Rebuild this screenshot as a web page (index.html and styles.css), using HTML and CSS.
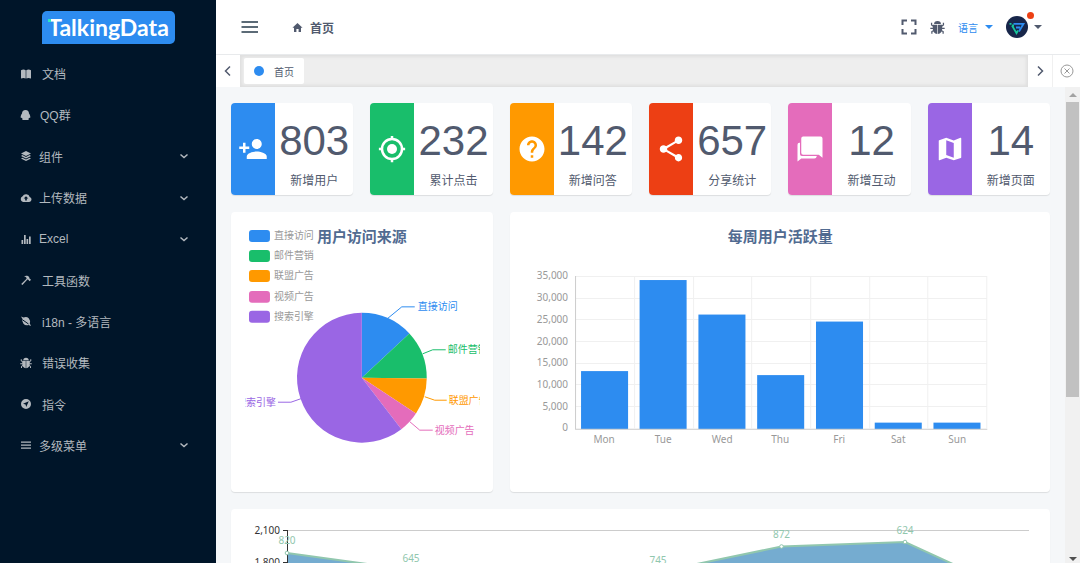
FILE: index.html
```html
<!DOCTYPE html>
<html lang="zh-CN">
<head>
<meta charset="utf-8">
<title>首页</title>
<meta name="viewport" content="width=device-width, initial-scale=1">
<link rel="stylesheet" href="styles.css">
</head>
<body>
<div class="app">
  <aside class="sidebar">
    <a class="logo" href="#"><span class="logo-dots"></span>TalkingData</a>
    <nav class="menu">
      <a class="menu-item" href="#"><svg class="icon" viewBox="0 0 12 12"><path d="M1 2.200Q3.500 1 5.700 2.200V10.600Q3.500 9.500 1 10.600zM6.300 2.200Q8.500 1 11 2.200V10.600Q8.500 9.500 6.300 10.600z"/></svg><span>文档</span></a>
      <a class="menu-item menu-item-qq" href="#"><svg class="icon" viewBox="0 0 12 12"><path d="M5.500 1C7.800 1 8.900 2.500 9 4.500C10 6 10.600 7.500 10.200 8.800C9.900 9.200 9.500 8.800 9.200 8.400C9 9.200 8.700 9.500 8.200 10C9.200 10.500 8.700 11 7.700 11H3.300C2.300 11 1.800 10.500 2.800 10C2.300 9.500 2 9.200 1.800 8.400C1.500 8.800 1.100 9.200 .8 8.800C.4 7.500 1 6 2 4.500C2.100 2.500 3.200 1 5.500 1z"/></svg><span>QQ群</span></a>
      <button class="menu-item menu-group" type="button"><svg class="icon" viewBox="0 0 12 12"><path d="M6 1L11 3.500L6 6L1 3.500zM2.400 5.100L6 6.900L9.600 5.100L11 6L6 8.500L1 6zM2.400 7.700L6 9.500L9.600 7.700L11 8.600L6 11.100L1 8.600z"/></svg><span>组件</span><svg class="chevron" viewBox="0 0 8 8"><path d="M.5 2.500L4 5.500L7.500 2.500"/></svg></button>
      <button class="menu-item menu-group" type="button"><svg class="icon" viewBox="0 0 12 12"><path fill-rule="evenodd" d="M9.700 5.100A3.800 3.800 0 0 0 2.600 4.300A3 3 0 0 0 3 10H9.200A2.500 2.500 0 0 0 9.700 5.100zM6 4.200L8.300 6.600H6.800V8.500H5.200V6.600H3.700z"/></svg><span>上传数据</span><svg class="chevron" viewBox="0 0 8 8"><path d="M.5 2.500L4 5.500L7.500 2.500"/></svg></button>
      <button class="menu-item menu-group" type="button"><svg class="icon" viewBox="0 0 12 12"><path d="M1.500 7H3.200V11H1.500zM4 2H5.700V11H4zM6.500 6H8.200V11H6.500zM9 3.500H10.700V11H9z"/></svg><span>Excel</span><svg class="chevron" viewBox="0 0 8 8"><path d="M.5 2.500L4 5.500L7.500 2.500"/></svg></button>
      <a class="menu-item" href="#"><svg class="icon" viewBox="0 0 12 12"><path d="M4 2.300C6 1.200 8 1.600 9.200 3L9.300 4.200L11 5.800L9.700 7.200L8 5.500L7.400 5.600L2.400 11L1.200 9.900L6.600 4.800L6.300 3.500Q5.500 2.500 4 2.300z"/></svg><span>工具函数</span></a>
      <a class="menu-item" href="#"><svg class="icon" viewBox="0 0 12 12"><path d="M1 1.500L3.500 2.500Q6.500 1 8.700 3.200Q11 6 9.800 8.500L11 11L8.500 10Q5.500 11 3.500 8.800Q1.500 6.500 2.500 4z"/><path class="icon-cut" d="M2.500 4.800L8.500 9"/></svg><span>i18n - 多语言</span></a>
      <a class="menu-item" href="#"><svg class="icon" viewBox="0 0 24 24"><use href="#bug"/></svg><span>错误收集</span></a>
      <a class="menu-item" href="#"><svg class="icon" viewBox="0 0 12 12"><path fill-rule="evenodd" d="M6 1A5 5 0 1 1 6 11A5 5 0 1 1 6 1zM8.800 3.200L3 5.800L5.600 6.400L6.200 9z"/></svg><span>指令</span></a>
      <button class="menu-item menu-group" type="button"><svg class="icon" viewBox="0 0 12 12"><path d="M1 2.500H11V3.700H1zM1 5.500H11V6.700H1zM1 8.500H11V9.700H1z"/></svg><span>多级菜单</span><svg class="chevron" viewBox="0 0 8 8"><path d="M.5 2.500L4 5.500L7.500 2.500"/></svg></button>
    </nav>
  </aside>

  <div class="main">
    <header class="topbar">
      <button class="plain toggle" type="button" aria-label="折叠菜单"><svg viewBox="0 0 18 14"><path d="M.5 2H17M.5 7H17M.5 12H17"/></svg></button>
      <a class="crumb" href="#"><svg viewBox="0 0 12 12"><path d="M6 1L11.500 6.200H9.800V11H7.200V7.500H4.800V11H2.200V6.200H.5z"/></svg>首页</a>
      <div class="tools">
        <button class="plain" type="button" aria-label="全屏"><svg class="tool-full" viewBox="0 0 16 16"><path d="M1.500 6V1.500H6M10 1.500H14.500V6M14.500 10V14.500H10M6 14.500H1.500V10"/></svg></button>
        <button class="plain" type="button" aria-label="错误日志"><svg class="tool-bug" viewBox="0 0 24 24"><g id="bug"><path d="M6.500 6.500A5.500 5 0 0 1 17.500 6.500z"/><path d="M4.500 7.500H11.500V22.500Q4.500 21 4.500 14zM12.500 7.500H19.500V14Q19.500 21 12.500 22.500z"/><path fill="none" stroke="currentColor" stroke-width="2" d="M5.500 10L2.500 8V4.500M18.500 10L21.500 8V4.500M5.500 13.500H.5M18.500 13.500H23.500M6 17L3 18.500V22M18 17L21 18.500V22"/></g></svg></button>
        <button class="plain lang" type="button">语言<span class="caret"></span></button>
        <button class="plain user" type="button" aria-label="用户">
          <span class="avatar"><svg viewBox="0 0 22 22"><circle cx="11" cy="11" r="11" fill="#17264a"/><path fill="none" stroke="#2d8cf0" stroke-width="1.800" d="M7.500 7.800H17.500L13 15.500M10 11.500H14"/><path fill="none" stroke="#16c79a" stroke-width="1.800" d="M3.500 7.800H5.500M6 9.500L10.500 17.200L12 14.500M6 9.500H8"/></svg><span class="badge"></span></span>
          <span class="caret"></span>
        </button>
      </div>
    </header>

    <div class="tabs">
      <button class="tab-btn" type="button" aria-label="向左"><svg viewBox="0 0 12 12"><path d="M8 1.500L3.500 6L8 10.500"/></svg></button>
      <div class="tab-track"><a class="tab" href="#"><span class="tab-dot"></span>首页</a></div>
      <button class="tab-btn" type="button" aria-label="向右"><svg viewBox="0 0 12 12"><path d="M4 1.500L8.500 6L4 10.500"/></svg></button>
      <button class="tab-btn tab-close" type="button" aria-label="关闭"><svg viewBox="0 0 14 14"><path d="M4.500 4.500L9.500 9.500M9.500 4.500L4.500 9.500"/><circle cx="7" cy="7" r="6"/></svg></button>
    </div>

    <div class="view">
      <main class="content">
        <section class="card stat stat-blue"><div class="stat-icon"><svg viewBox="0 0 24 24"><path d="M15 12c2.210 0 4-1.790 4-4s-1.790-4-4-4-4 1.790-4 4 1.790 4 4 4zm-9-2V7H4v3H1v2h3v3h2v-3h3v-2H6zm9 4c-2.670 0-8 1.340-8 4v2h16v-2c0-2.660-5.330-4-8-4z"/></svg></div><div class="stat-body"><strong>803</strong><span>新增用户</span></div></section>
        <section class="card stat stat-green"><div class="stat-icon"><svg viewBox="0 0 24 24"><circle cx="12" cy="12" r="4"/><circle cx="12" cy="12" r="8" fill="none" stroke="currentColor" stroke-width="2"/><path d="M11 1.500H13V4H11zM11 20H13V22.500H11zM1.500 11H4V13H1.500zM20 11H22.500V13H20z"/></svg></div><div class="stat-body"><strong>232</strong><span>累计点击</span></div></section>
        <section class="card stat stat-orange"><div class="stat-icon"><svg viewBox="0 0 24 24"><path d="M12 2C6.480 2 2 6.480 2 12s4.480 10 10 10 10-4.480 10-10S17.520 2 12 2zm1 17h-2v-2h2v2zm2.070-7.750l-.9.920C13.450 12.900 13 13.500 13 15h-2v-.5c0-1.100.450-2.100 1.170-2.830l1.240-1.260c.370-.360.590-.860.590-1.410 0-1.100-.9-2-2-2s-2 .9-2 2H8c0-2.210 1.790-4 4-4s4 1.790 4 4c0 .880-.360 1.680-.930 2.250z"/></svg></div><div class="stat-body"><strong>142</strong><span>新增问答</span></div></section>
        <section class="card stat stat-red"><div class="stat-icon"><svg viewBox="0 0 24 24"><path d="M18 16.080c-.760 0-1.440.3-1.960.770L8.910 12.700c.050-.230.090-.460.090-.7s-.040-.470-.090-.7l7.050-4.110c.540.5 1.250.810 2.040.810 1.660 0 3-1.340 3-3s-1.340-3-3-3-3 1.340-3 3c0 .240.040.470.090.7L8.040 9.810C7.500 9.310 6.790 9 6 9c-1.660 0-3 1.340-3 3s1.340 3 3 3c.790 0 1.500-.310 2.040-.810l7.120 4.160c-.050.210-.080.430-.080.650 0 1.610 1.310 2.920 2.920 2.920s2.920-1.310 2.920-2.920-1.310-2.920-2.920-2.920z"/></svg></div><div class="stat-body"><strong>657</strong><span>分享统计</span></div></section>
        <section class="card stat stat-pink"><div class="stat-icon"><svg viewBox="0 0 24 24"><path d="M6.500 2H20.500A1.500 1.500 0 0 1 22 3.500V19L19 16.500H6.500A1.500 1.500 0 0 1 5 15V3.500A1.500 1.500 0 0 1 6.500 2zM3.500 7H4V16Q4 17.500 5.500 17.500H17.500Q17 19.500 15.500 19.500H5L2 22V8.500Q2 7 3.500 7z"/></svg></div><div class="stat-body"><strong>12</strong><span>新增互动</span></div></section>
        <section class="card stat stat-purple"><div class="stat-icon"><svg viewBox="0 0 24 24"><path d="M20.500 3l-.160.030L15 5.100 9 3 3.360 4.900c-.210.070-.360.250-.360.480V20.500c0 .280.220.5.5.5l.160-.030L9 18.900l6 2.100 5.640-1.900c.210-.070.360-.250.360-.480V3.500c0-.280-.220-.5-.5-.5zM15 19l-6-2.110V5l6 2.110V19z"/></svg></div><div class="stat-body"><strong>14</strong><span>新增页面</span></div></section>

        <section class="card chart chart-pie">
          <svg viewBox="14 0 235 280" role="img" aria-label="用户访问来源">
            <g class="legend">
              <rect x="18" y="18" width="21" height="12" rx="3" fill="#2d8cf0"/><text x="43" y="27">直接访问</text>
              <rect x="18" y="38" width="21" height="12" rx="3" fill="#19be6b"/><text x="43" y="47">邮件营销</text>
              <rect x="18" y="58" width="21" height="12" rx="3" fill="#ff9900"/><text x="43" y="67">联盟广告</text>
              <rect x="18" y="79" width="21" height="12" rx="3" fill="#e46cbb"/><text x="43" y="88">视频广告</text>
              <rect x="18" y="99" width="21" height="12" rx="3" fill="#9a66e4"/><text x="43" y="108">搜索引擎</text>
            </g>
            <text class="chart-title" x="131" y="30">用户访问来源</text>
            <path fill="#2d8cf0" d="M131 166V101A65 65 0 0 1 178.600 121.700z"/>
            <path fill="#19be6b" d="M131 166L178.600 121.700A65 65 0 0 1 196 166.700z"/>
            <path fill="#ff9900" d="M131 166L196 166.700A65 65 0 0 1 185.200 201.900z"/>
            <path fill="#e46cbb" d="M131 166L185.200 201.900A65 65 0 0 1 170.600 217.600z"/>
            <path fill="#9a66e4" d="M131 166L170.600 217.600A65 65 0 1 1 131 101z"/>
            <g class="leader">
              <path stroke="#2d8cf0" d="M157 106.500L171 95H184"/>
              <path stroke="#19be6b" d="M192 142L202 138H215"/>
              <path stroke="#ff9900" d="M194 185L204 188.500H216"/>
              <path stroke="#e46cbb" d="M179 210L189 218.500H202"/>
              <path stroke="#9a66e4" d="M70 187L60 190.500H47"/>
            </g>
            <g class="slice-label">
              <text x="187" y="98" fill="#2d8cf0">直接访问</text>
              <text x="217" y="141" fill="#19be6b">邮件营销</text>
              <text x="218" y="192" fill="#ff9900">联盟广告</text>
              <text x="204" y="222" fill="#e46cbb">视频广告</text>
              <text x="45" y="194" fill="#9a66e4" text-anchor="end">搜索引擎</text>
            </g>
          </svg>
        </section>

        <section class="card chart chart-bar">
          <svg viewBox="0 0 540 280" role="img" aria-label="每周用户活跃量">
            <text class="chart-title" x="270" y="30">每周用户活跃量</text>
            <path class="grid-lines" d="M66 64.500H477M66 86.500H477M66 107.500H477M66 129.500H477M66 151.500H477M66 172.500H477M66 194.500H477M124.500 64V216M183.500 64V216M241.500 64V216M300.500 64V216M359.500 64V216M417.500 64V216M476.500 64V216"/>
            <g fill="#2d8cf0">
              <rect x="71" y="159" width="47" height="58"/>
              <rect x="129.500" y="68" width="47" height="149"/>
              <rect x="188.300" y="102.500" width="47" height="114.500"/>
              <rect x="247" y="163" width="47" height="54"/>
              <rect x="305.800" y="109.500" width="47" height="107.500"/>
              <rect x="364.500" y="210.500" width="47" height="6.500"/>
              <rect x="423.200" y="210.500" width="47" height="6.500"/>
            </g>
            <path class="axis-lines" d="M65.500 64V217M65 217H477"/>
            <g class="axis-y">
              <text x="58" y="67">35,000</text><text x="58" y="89">30,000</text><text x="58" y="111">25,000</text><text x="58" y="133">20,000</text><text x="58" y="154">15,000</text><text x="58" y="176">10,000</text><text x="58" y="198">5,000</text><text x="58" y="219">0</text>
            </g>
            <g class="axis-x">
              <text x="94" y="231">Mon</text><text x="153" y="231">Tue</text><text x="212" y="231">Wed</text><text x="270" y="231">Thu</text><text x="329" y="231">Fri</text><text x="388" y="231">Sat</text><text x="447" y="231">Sun</text>
            </g>
          </svg>
        </section>

        <section class="card chart chart-area">
          <svg viewBox="0 0 819 280" role="img" aria-label="服务请求量">
            <path stroke="#cccccc" d="M56 21.500H798"/>
            <path fill="#75acd0" d="M56 44L180 61L303 81L427 63L550.500 37.500L674 33L798 90V240H56z"/>
            <path stroke="#333333" d="M56.500 21V240M52 21.500H57M52 53.500H57"/>
            <path fill="none" stroke="#91c7ae" stroke-width="2" d="M56 44L180 61L303 81L427 63L550.500 37.500L674 33L798 90"/>
            <g fill="#ffffff" stroke="#91c7ae"><circle cx="56" cy="44" r="1.800"/><circle cx="550.500" cy="37.500" r="1.800"/><circle cx="674" cy="33" r="1.800"/></g>
            <g class="axis-y axis-dark"><text x="49" y="25">2,100</text><text x="49" y="57">1,800</text></g>
            <g class="point-label"><text x="56" y="35">820</text><text x="180" y="53">645</text><text x="427" y="55">745</text><text x="550.500" y="29">872</text><text x="674" y="25">624</text></g>
          </svg>
        </section>
      </main>
      <div class="scrollbar" aria-hidden="true"><span class="arrow arrow-up"></span><span class="thumb"></span><span class="arrow arrow-down"></span></div>
    </div>
  </div>
</div>
</body>
</html>
```
FILE: styles.css
```css
* { box-sizing: border-box; }
body {
  margin: 0;
  color: #515a6e;
  font-family: "Liberation Sans", "Noto Sans CJK SC", sans-serif;
  font-size: 12px;
}
a { color: inherit; text-decoration: none; }
button { font: inherit; color: inherit; }
svg { display: block; fill: currentColor; }

.app { display: flex; height: 100vh; overflow: hidden; }

/* Sidebar */
.sidebar { flex: 0 0 216px; background: #001529; color: #b3b9bf; }
.logo {
  position: relative;
  display: block;
  width: 133px;
  height: 33px;
  margin: 11px auto 9px 42px;
  border-radius: 5px 5px 5px 0;
  background: #2d8cf0;
  color: #ffffff;
  font-family: Lato, sans-serif;
  font-size: 23px;
  font-weight: 700;
  line-height: 32px;
  text-align: center;
}
.logo-dots {
  position: absolute;
  left: 6px;
  top: 8px;
  width: 3px;
  height: 3px;
  background: #2ee6c0;
}
.menu { display: grid; grid-template-rows: repeat(10, 1fr); height: 413px; }
.menu-item {
  display: flex;
  align-items: center;
  gap: 10px;
  padding: 0 28px 0 20px;
  border: 0;
  background: none;
  text-align: left;
}
.menu-item-qq { gap: 8px; }
.menu-group { gap: 7px; }
.icon { width: 12px; height: 12px; }
.icon-cut { fill: none; stroke: #001529; stroke-width: 1px; }
.chevron { width: 8px; height: 8px; margin-left: auto; fill: none; stroke: currentColor; stroke-width: 1.500px; }

/* Top bar */
.main { flex: 1; min-width: 0; display: flex; flex-direction: column; }
.topbar { flex: 0 0 55px; display: flex; align-items: center; padding: 0 38px 0 25px; background: #ffffff; border-bottom: 1px solid #e8eaec; }
.plain { display: flex; align-items: center; padding: 0; border: 0; background: none; }
.toggle svg { width: 18px; height: 14px; stroke: #5c6b77; stroke-width: 2px; }
.crumb { display: flex; align-items: center; gap: 7px; margin-left: 33px; font-weight: 700; }
.crumb svg { width: 11px; height: 11px; }
.tools { display: flex; align-items: center; gap: 13px; margin-left: auto; }
.tool-full { width: 16px; height: 16px; fill: none; stroke: currentColor; stroke-width: 2px; }
.tool-bug { width: 15px; height: 15px; }
.lang { gap: 7px; color: #2d8cf0; font-size: 10px; }
.caret { border: 4px solid transparent; border-top-color: currentColor; border-bottom: 0; }
.user { gap: 6px; }
.avatar { position: relative; width: 22px; }
.badge { position: absolute; right: -6px; top: -4px; width: 7px; height: 7px; border-radius: 50%; background: #ed4014; }

/* Open pages */
.tabs { flex: 0 0 32px; display: flex; background: #ffffff; }
.tab-btn { flex: 0 0 24px; display: flex; align-items: center; justify-content: center; padding: 0; border: 0; background: #ffffff; }
.tab-btn svg { width: 12px; height: 12px; fill: none; stroke: currentColor; stroke-width: 1.500px; }
.tab-btn.tab-close { flex-basis: 28px; border-left: 1px solid #f0f0f0; color: #999999; }
.tab-close svg { width: 14px; height: 14px; stroke-width: 1px; }
.tab-track { flex: 1; padding: 3px 4px; background: #eeeeee; box-shadow: inset 0 0 3px 2px rgba(100, 100, 100, .1); }
.tab { display: flex; align-items: center; gap: 10px; width: max-content; height: 26px; padding: 0 10px; border-radius: 2px; background: #ffffff; font-size: 10px; }
.tab-dot { width: 10px; height: 10px; border-radius: 50%; background: #2d8cf0; }

/* Content */
.view { flex: 1; min-height: 0; display: flex; background: #f5f7f9; }
.content {
  flex: 1;
  min-width: 0;
  display: grid;
  grid-template-columns: repeat(6, minmax(0, 1fr));
  grid-auto-rows: max-content;
  gap: 17px;
  align-content: start;
  padding: 16px 15px;
  overflow: hidden;
}
.card { border-radius: 4px; background: #ffffff; box-shadow: 0 1px 1px rgba(0, 0, 0, .1); overflow: hidden; }
.stat { display: flex; height: 92px; }
.stat-icon { flex: 0 0 36%; display: flex; align-items: center; justify-content: center; color: #ffffff; }
.stat-icon svg { width: 30px; height: 30px; }
.stat-body { flex: 1; display: flex; flex-direction: column; align-items: center; gap: 8px; padding-top: 14px; white-space: nowrap; }
.stat-body strong { font-size: 42px; font-weight: 400; line-height: 48px; }
.stat-body span { line-height: 16px; }
.stat-blue .stat-icon { background: #2d8cf0; }
.stat-green .stat-icon { background: #19be6b; }
.stat-orange .stat-icon { background: #ff9900; }
.stat-red .stat-icon { background: #ed3f14; }
.stat-pink .stat-icon { background: #e46cbb; }
.stat-purple .stat-icon { background: #9a66e4; }

/* Charts */
.chart { min-height: 280px; font-family: "Noto Sans", "Noto Sans CJK SC", sans-serif; font-size: 10px; }
.chart svg { width: 100%; height: auto; overflow: hidden; }
.chart-pie { grid-column: span 2; padding: 0 13px 0 14px; }
.chart-bar { grid-column: span 4; }
.chart-area { grid-column: span 6; }
.chart-title { fill: #516b91; font-size: 15px; font-weight: 700; text-anchor: middle; }
.legend text { fill: #999999; }
.leader { fill: none; }
.grid-lines { fill: none; stroke: #f0f0f0; }
.axis-lines { fill: none; stroke: #cccccc; }
.axis-y { fill: #999999; text-anchor: end; }
.axis-x { fill: #999999; text-anchor: middle; }
.axis-y.axis-dark { fill: #333333; }
.point-label { fill: #91c7ae; text-anchor: middle; }

/* Scroll track */
.scrollbar { flex: 0 0 15px; display: flex; flex-direction: column; align-items: center; padding: 6px 0 2px; background: #f1f1f1; }
.arrow { border: 4px solid transparent; }
.arrow-up { border-top: 0; border-bottom-color: #a3a3a3; }
.arrow-down { margin-top: auto; border-bottom: 0; border-top-color: #505050; }
.thumb { width: 13px; height: 63%; margin-top: 5px; background: #c1c1c1; }
```
